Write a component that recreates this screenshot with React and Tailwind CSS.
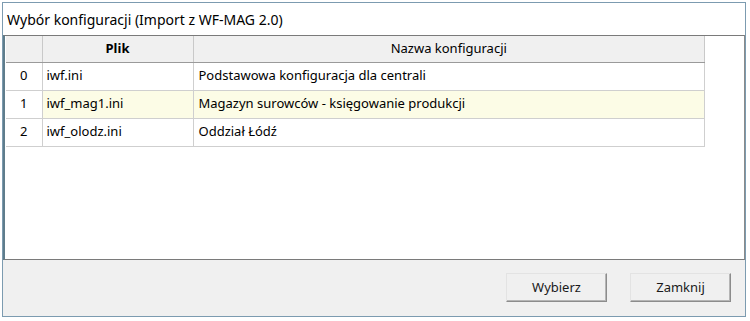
const rows = [
  { id: 0, file: 'iwf.ini', name: 'Podstawowa konfiguracja dla centrali' },
  { id: 1, file: 'iwf_mag1.ini', name: 'Magazyn surowców - księgowanie produkcji', active: true },
  { id: 2, file: 'iwf_olodz.ini', name: 'Oddział Łódź' },
];

const WinButton = ({ children }) => (
  <button className="w-[101px] h-[29px] bg-[#f0f0f0] border border-t-[#e3e3e3] border-l-[#e3e3e3] border-r-[#8c8c8c] border-b-[#8c8c8c] shadow-[inset_-1px_-1px_0_#b5b5b5] text-[13px] text-[#1a1a1a]">
    {children}
  </button>
);

export default function App() {
  return (
    <div className="w-[750px] h-[321px] bg-white pt-[2px] pl-[2px] font-['Noto_Sans',sans-serif] text-black">
      <div className="w-[744px] h-[315px] border border-[#7c9bb0] bg-[#f4f9fc] flex flex-col">
        {/* Title */}
        <div className="h-[32px] bg-white flex items-center pl-[4px] pt-[1px] text-[14px]">
          Wybór konfiguracji (Import z WF-MAG 2.0)
        </div>

        {/* Grid panel */}
        <div className="h-[225px] bg-white border-t border-l-2 border-r border-b border-t-[#7a7a7a] border-l-[#5f7d8c] border-r-[#8a8a8a] border-b-[#7a7a7a] pl-[1px]">
          <table className="w-[699px] border-collapse text-[13px] table-fixed">
            <colgroup>
              <col className="w-[36px]" />
              <col className="w-[151px]" />
              <col />
            </colgroup>
            <thead>
              <tr className="h-[26px] bg-[#f0f0f0]">
                <th className="border-r border-b border-[#c9c9c9] border-b-[#9a9a9a]"></th>
                <th className="border-r border-b border-[#c9c9c9] border-b-[#9a9a9a] font-bold text-center">Plik</th>
                <th className="border-r border-b border-[#c9c9c9] border-b-[#9a9a9a] font-normal text-center">Nazwa konfiguracji</th>
              </tr>
            </thead>
            <tbody>
              {rows.map((r) => (
                <tr key={r.id} className="h-[28px]">
                  <td className="border-r border-b border-[#cfcfcf] text-center bg-white">{r.id}</td>
                  <td className={`border-r border-b border-[#cfcfcf] pl-[4px] ${r.active ? 'bg-[#fcfce6]' : 'bg-white'}`}>{r.file}</td>
                  <td className={`border-r border-b border-[#cfcfcf] pl-[5px] ${r.active ? 'bg-[#fcfce6]' : 'bg-white'}`}>{r.name}</td>
                </tr>
              ))}
            </tbody>
          </table>
        </div>

        {/* Buttons */}
        <div className="flex-1 bg-[#f0f0f0] flex justify-end items-start pt-[13px] pr-[14px] gap-[23px]">
          <WinButton>Wybierz</WinButton>
          <WinButton>Zamknij</WinButton>
        </div>
      </div>
    </div>
  );
}
